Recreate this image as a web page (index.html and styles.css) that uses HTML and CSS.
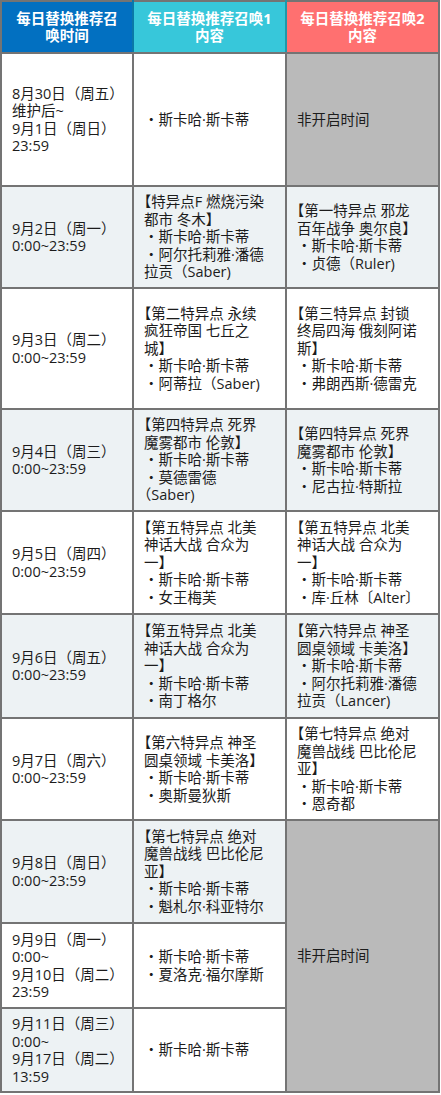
FILE: index.html
```html
<!DOCTYPE html>
<html lang="zh-CN">
<head>
<meta charset="utf-8">
<title>每日替换推荐召唤</title>
<link rel="stylesheet" href="styles.css">
</head>
<body>
<table class="schedule">
  <colgroup>
    <col class="c-time">
    <col class="c-one">
    <col class="c-two">
  </colgroup>
  <thead>
    <tr class="h-head">
      <th class="th-time">每日替换推荐召<br>唤时间</th>
      <th class="th-one">每日替换推荐召唤1<br>内容</th>
      <th class="th-two">每日替换推荐召唤2<br>内容</th>
    </tr>
  </thead>
  <tbody>
    <tr class="h-r1">
      <td>8月30日（周五）<br>维护后~<br>9月1日（周日）<br>23:59</td>
      <td>・斯卡哈·斯卡蒂</td>
      <td class="off">非开启时间</td>
    </tr>
    <tr class="h-r2 alt">
      <td>9月2日（周一）<br>0:00~23:59</td>
      <td>【特异点F 燃烧污染<br>都市 冬木】<br>・斯卡哈·斯卡蒂<br>・阿尔托莉雅·潘德<br>拉贡（Saber)</td>
      <td>【第一特异点 邪龙<br>百年战争 奥尔良】<br>・斯卡哈·斯卡蒂<br>・贞德（Ruler)</td>
    </tr>
    <tr class="h-r3">
      <td>9月3日（周二）<br>0:00~23:59</td>
      <td>【第二特异点 永续<br>疯狂帝国 七丘之<br>城】<br>・斯卡哈·斯卡蒂<br>・阿蒂拉（Saber)</td>
      <td>【第三特异点 封锁<br>终局四海 俄刻阿诺<br>斯】<br>・斯卡哈·斯卡蒂<br>・弗朗西斯·德雷克</td>
    </tr>
    <tr class="h-r4 alt">
      <td>9月4日（周三）<br>0:00~23:59</td>
      <td>【第四特异点 死界<br>魔雾都市 伦敦】<br>・斯卡哈·斯卡蒂<br>・莫德雷德<br>（Saber)</td>
      <td>【第四特异点 死界<br>魔雾都市 伦敦】<br>・斯卡哈·斯卡蒂<br>・尼古拉·特斯拉</td>
    </tr>
    <tr class="h-r5">
      <td>9月5日（周四）<br>0:00~23:59</td>
      <td>【第五特异点 北美<br>神话大战 合众为<br>一】<br>・斯卡哈·斯卡蒂<br>・女王梅芙</td>
      <td>【第五特异点 北美<br>神话大战 合众为<br>一】<br>・斯卡哈·斯卡蒂<br>・库·丘林〔Alter〕</td>
    </tr>
    <tr class="h-r6 alt">
      <td>9月6日（周五）<br>0:00~23:59</td>
      <td>【第五特异点 北美<br>神话大战 合众为<br>一】<br>・斯卡哈·斯卡蒂<br>・南丁格尔</td>
      <td>【第六特异点 神圣<br>圆桌领域 卡美洛】<br>・斯卡哈·斯卡蒂<br>・阿尔托莉雅·潘德<br>拉贡（Lancer)</td>
    </tr>
    <tr class="h-r7">
      <td>9月7日（周六）<br>0:00~23:59</td>
      <td>【第六特异点 神圣<br>圆桌领域 卡美洛】<br>・斯卡哈·斯卡蒂<br>・奥斯曼狄斯</td>
      <td>【第七特异点 绝对<br>魔兽战线 巴比伦尼<br>亚】<br>・斯卡哈·斯卡蒂<br>・恩奇都</td>
    </tr>
    <tr class="h-r8 alt">
      <td>9月8日（周日）<br>0:00~23:59</td>
      <td>【第七特异点 绝对<br>魔兽战线 巴比伦尼<br>亚】<br>・斯卡哈·斯卡蒂<br>・魁札尔·科亚特尔</td>
      <td class="off" rowspan="3">非开启时间</td>
    </tr>
    <tr class="h-r9">
      <td>9月9日（周一）<br>0:00~<br>9月10日（周二）<br>23:59</td>
      <td>・斯卡哈·斯卡蒂<br>・夏洛克·福尔摩斯</td>
    </tr>
    <tr class="h-r10">
      <td class="tint">9月11日（周三）<br>0:00~<br>9月17日（周二）<br>13:59</td>
      <td>・斯卡哈·斯卡蒂</td>
    </tr>
  </tbody>
</table>
</body>
</html>
```
FILE: styles.css
```css
html, body {
  margin: 0;
  padding: 0;
  background: #ffffff;
}

.schedule {
  border-collapse: collapse;
  table-layout: fixed;
  width: 438px;
  font-family: "Open Sans", "Noto Sans CJK SC", "Microsoft YaHei", sans-serif;
  font-size: 14.5px;
  line-height: 17.5px;
  color: #1c1c1c;
  text-spacing-trim: trim-start;
}

.c-time { width: 132px; }
.c-one { width: 153px; }
.c-two { width: 153px; }

.schedule th,
.schedule td {
  border: 2px solid #747474;
  padding: 6px 4px 6px 10px;
  vertical-align: middle;
  text-align: left;
  white-space: nowrap;
  background: #ffffff;
}

.schedule th {
  color: #ffffff;
  font-weight: bold;
  text-align: center;
  padding: 0 2px;
  line-height: 17px;
}

.schedule th.th-time {
  background: #0270c1;
  border-right-color: #0a78a8;
}

.schedule th.th-one {
  background: #37c7da;
  border-right-color: #1d98aa;
}

.schedule th.th-two {
  background: #ff7070;
}

.schedule .alt td,
.schedule td.tint {
  background: #edf2f4;
}

.schedule td.off,
.schedule .alt td.off {
  background: #bababa;
}

.h-head { height: 52px; }
.h-r1 { height: 133px; }
.h-r2 { height: 102px; }
.h-r3 { height: 121px; }
.h-r4 { height: 102px; }
.h-r5 { height: 103px; }
.h-r6 { height: 104px; }
.h-r7 { height: 102px; }
.h-r8 { height: 103px; }
.h-r9 { height: 85px; }
.h-r10 { height: 84px; }
```
